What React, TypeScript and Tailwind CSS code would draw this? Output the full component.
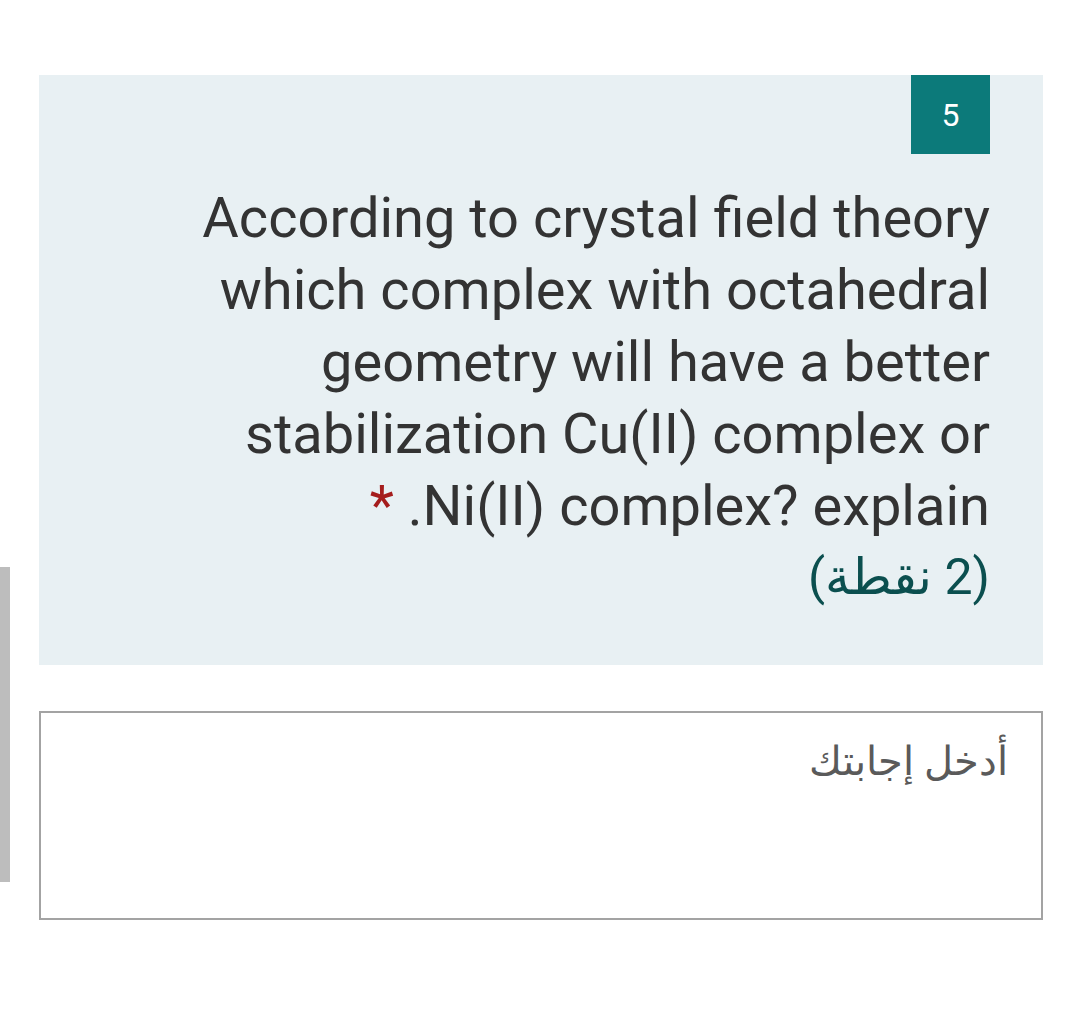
const lines = [
  "According to crystal field theory",
  "which complex with octahedral",
  "geometry will have a better",
  "stabilization Cu(II) complex or",
];

export default function App() {
  return (
    <div className="relative min-h-[1014px] bg-white pl-[39px] pr-[37px] pt-[75px] font-['Roboto',sans-serif]">
      <div className="absolute left-0 top-[567px] h-[315px] w-[10px] bg-[#bdbdbd]" />

      <div className="bg-[#e8f0f3] pr-[53px] pb-[60px]">
        <div className="flex justify-end">
          <div className="flex h-[79px] w-[79px] items-center justify-center bg-[#0c7a7a] text-[32px] text-white">
            5
          </div>
        </div>

        <div className="mt-[28px] text-right text-[56px] leading-[72px] text-[#333333]">
          {lines.map((line) => (
            <div key={line}>{line}</div>
          ))}
          <div>
            <span className="text-[#a51d1d]">*</span> .Ni(II) complex? explain
          </div>
        </div>

        <div
          dir="rtl"
          className="mt-[7px] text-right text-[50px] leading-[56px] text-[#0b4f4f]"
        >
          (2 نقطة)
        </div>
      </div>

      <div className="mt-[46px] h-[209px] border-2 border-[#a3a3a3] bg-white pr-[33px] pt-[25px]">
        <div dir="rtl" className="text-[40px] leading-[48px] text-[#5a5a5a]">
          أدخل إجابتك
        </div>
      </div>
    </div>
  );
}
